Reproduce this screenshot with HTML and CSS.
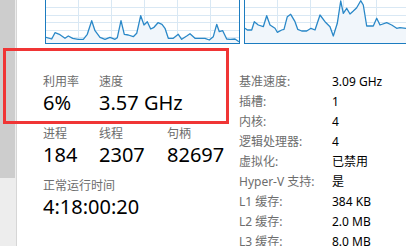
FILE: index.html
```html
<!DOCTYPE html>
<html lang="zh-CN">
<head>
<meta charset="utf-8">
<title>CPU</title>
<link rel="stylesheet" href="styles.css">
</head>
<body>
<div class="app">
  <div class="scroll"><div class="thumb"></div></div>
  <div class="main">
    <div class="graphs">
      <div class="graph g1">
        <svg width="193" height="43" viewBox="0 0 193 43">
          <g class="grid">
            <line x1="32.5" y1="0" x2="32.5" y2="43"/>
            <line x1="65.5" y1="0" x2="65.5" y2="43"/>
            <line x1="98.5" y1="0" x2="98.5" y2="43"/>
            <line x1="131.5" y1="0" x2="131.5" y2="43"/>
            <line x1="164.5" y1="0" x2="164.5" y2="43"/>
            <line x1="0" y1="7.5" x2="193" y2="7.5"/>
            <line x1="0" y1="15.5" x2="193" y2="15.5"/>
            <line x1="0" y1="22.5" x2="193" y2="22.5"/>
            <line x1="0" y1="30.5" x2="193" y2="30.5"/>
            <line x1="0" y1="37.5" x2="193" y2="37.5"/>
          </g>
          <polygon class="area" points="0,43 0,37.3 5.7,39 9,32.7 14,34.7 19,38.3 22.3,36 26.7,38.3 32.3,39.3 37.3,39.3 41.3,34.3 45.7,20.7 49,30.7 54,37.3 59,39.3 64,37.3 69,39.3 71.3,37.7 75,20.7 78.3,34.3 82.3,35 87.3,36.7 90.7,33.3 94.7,15.7 98,25 101.3,21.7 104.7,29 108,27.3 112,22.7 116,24.3 119,28.3 122.3,38.3 127.3,38.3 132.3,34.3 135.7,39.3 140.7,36 144,33.7 149,38.3 154,38.3 159,38.3 163.3,40 167.3,36.7 170.7,24.3 173.3,31.7 176.7,30.7 180.7,39 184,39.3 189,39 193,41.7 193,43"/>
          <polyline class="line" points="0,37.3 5.7,39 9,32.7 14,34.7 19,38.3 22.3,36 26.7,38.3 32.3,39.3 37.3,39.3 41.3,34.3 45.7,20.7 49,30.7 54,37.3 59,39.3 64,37.3 69,39.3 71.3,37.7 75,20.7 78.3,34.3 82.3,35 87.3,36.7 90.7,33.3 94.7,15.7 98,25 101.3,21.7 104.7,29 108,27.3 112,22.7 116,24.3 119,28.3 122.3,38.3 127.3,38.3 132.3,34.3 135.7,39.3 140.7,36 144,33.7 149,38.3 154,38.3 159,38.3 163.3,40 167.3,36.7 170.7,24.3 173.3,31.7 176.7,30.7 180.7,39 184,39.3 189,39 193,41.7"/>
        </svg>
      </div>
      <div class="graph g2">
        <svg width="175" height="43" viewBox="0 0 175 43">
          <g class="grid">
            <line x1="32.5" y1="0" x2="32.5" y2="43"/>
            <line x1="65.5" y1="0" x2="65.5" y2="43"/>
            <line x1="98.5" y1="0" x2="98.5" y2="43"/>
            <line x1="131.5" y1="0" x2="131.5" y2="43"/>
            <line x1="164.5" y1="0" x2="164.5" y2="43"/>
            <line x1="0" y1="7.5" x2="175" y2="7.5"/>
            <line x1="0" y1="15.5" x2="175" y2="15.5"/>
            <line x1="0" y1="22.5" x2="175" y2="22.5"/>
            <line x1="0" y1="30.5" x2="175" y2="30.5"/>
            <line x1="0" y1="37.5" x2="175" y2="37.5"/>
          </g>
          <polygon class="area" points="0,43 0,28.3 2.3,30 6.7,30 9.3,21.7 13.3,25 18.3,26.7 21.7,15.7 25,25 30,28.3 32.3,32.3 36.7,30 39,29.3 42.3,16.7 45.7,14.3 50,21.7 52.7,29.3 56.7,31 61.7,31 66,28.3 70,30 75,15 80,21.7 85,26.7 88.3,36 92.3,23.3 95.7,1 98.3,13.3 101.7,8.3 105,14 108.3,11 111.7,7.7 115.7,0.7 118.3,5 121.7,26 128.3,26 131.7,18.3 135,25 141.7,22.7 146.7,25 151.7,28.3 155,27.7 161,28.3 175,28 175,43"/>
          <polyline class="line" points="0,28.3 2.3,30 6.7,30 9.3,21.7 13.3,25 18.3,26.7 21.7,15.7 25,25 30,28.3 32.3,32.3 36.7,30 39,29.3 42.3,16.7 45.7,14.3 50,21.7 52.7,29.3 56.7,31 61.7,31 66,28.3 70,30 75,15 80,21.7 85,26.7 88.3,36 92.3,23.3 95.7,1 98.3,13.3 101.7,8.3 105,14 108.3,11 111.7,7.7 115.7,0.7 118.3,5 121.7,26 128.3,26 131.7,18.3 135,25 141.7,22.7 146.7,25 151.7,28.3 155,27.7 161,28.3 175,28"/>
        </svg>
      </div>
    </div>
    <div class="content">
      <div class="stats">
        <div class="row">
          <div class="stat w56"><div class="label">利用率</div><div class="value">6%</div></div>
          <div class="stat"><div class="label">速度</div><div class="value">3.57 GHz</div></div>
        </div>
        <div class="row">
          <div class="stat w56"><div class="label">进程</div><div class="value">184</div></div>
          <div class="stat w68"><div class="label">线程</div><div class="value">2307</div></div>
          <div class="stat"><div class="label">句柄</div><div class="value">82697</div></div>
        </div>
        <div class="row">
          <div class="stat"><div class="label">正常运行时间</div><div class="value">4:18:00:20</div></div>
        </div>
      </div>
      <dl class="details">
        <div class="drow"><dt>基准速度:</dt><dd>3.09 GHz</dd></div>
        <div class="drow"><dt>插槽:</dt><dd>1</dd></div>
        <div class="drow"><dt>内核:</dt><dd>4</dd></div>
        <div class="drow"><dt>逻辑处理器:</dt><dd>4</dd></div>
        <div class="drow"><dt>虚拟化:</dt><dd>已禁用</dd></div>
        <div class="drow"><dt>Hyper-V 支持:</dt><dd>是</dd></div>
        <div class="drow"><dt>L1 缓存:</dt><dd>384 KB</dd></div>
        <div class="drow"><dt>L2 缓存:</dt><dd>2.0 MB</dd></div>
        <div class="drow"><dt>L3 缓存:</dt><dd>8.0 MB</dd></div>
      </dl>
    </div>
  </div>
  <div class="highlight"></div>
</div>
</body>
</html>
```
FILE: styles.css
```css
* { box-sizing: border-box; }
html, body { margin: 0; padding: 0; background: #fff; }
body {
  width: 406px;
  height: 246px;
  overflow: hidden;
  font-family: "Noto Sans", "Noto Sans CJK SC", sans-serif;
  color: #000;
}
.app {
  position: relative;
  display: flex;
  width: 406px;
  height: 246px;
  overflow: hidden;
}
.scroll {
  flex: 0 0 17px;
  background: #ededed;
  border-right: 1px solid #d6d6d6;
}
.thumb {
  width: 15px;
  height: 178px;
  background: #cdcdcd;
}
.main {
  flex: 1;
  min-width: 0;
  padding-left: 26px;
  overflow: hidden;
}
.graphs {
  display: flex;
  gap: 4px;
  height: 44px;
  margin-left: 2px;
}
.graph {
  flex: none;
  height: 44px;
  border: 1px solid #1c7cc0;
  border-top: none;
  overflow: hidden;
}
.graph svg { display: block; }
.g1 { width: 195px; }
.g2 { width: 180px; border-right: none; }
.grid line { stroke: #d9e8f4; stroke-width: 1; }
.area { fill: #f1f6fb; }
.line { fill: none; stroke: #2a88c8; stroke-width: 1.3; stroke-linejoin: round; }
.content {
  display: flex;
}
.stats {
  flex: 0 0 196px;
  margin-top: 30px;
}
.row {
  display: flex;
  margin-bottom: 10px;
}
.w56 { flex: 0 0 56px; }
.w68 { flex: 0 0 68px; }
.stat { white-space: nowrap; }
.label {
  font-size: 12px;
  line-height: 16px;
  color: #6d6d6d;
}
.value {
  font-size: 20px;
  line-height: 26px;
  color: #000;
}
.details {
  margin: 28px 0 0;
  font-size: 12px;
  line-height: 20px;
}
.drow { display: flex; white-space: nowrap; }
.details dt { flex: 0 0 93px; color: #6d6d6d; }
.details dd { margin: 0; color: #000; }
.highlight {
  position: absolute;
  left: 3px;
  top: 48px;
  width: 226px;
  height: 76px;
  border: 3px solid #f03535;
}
```
